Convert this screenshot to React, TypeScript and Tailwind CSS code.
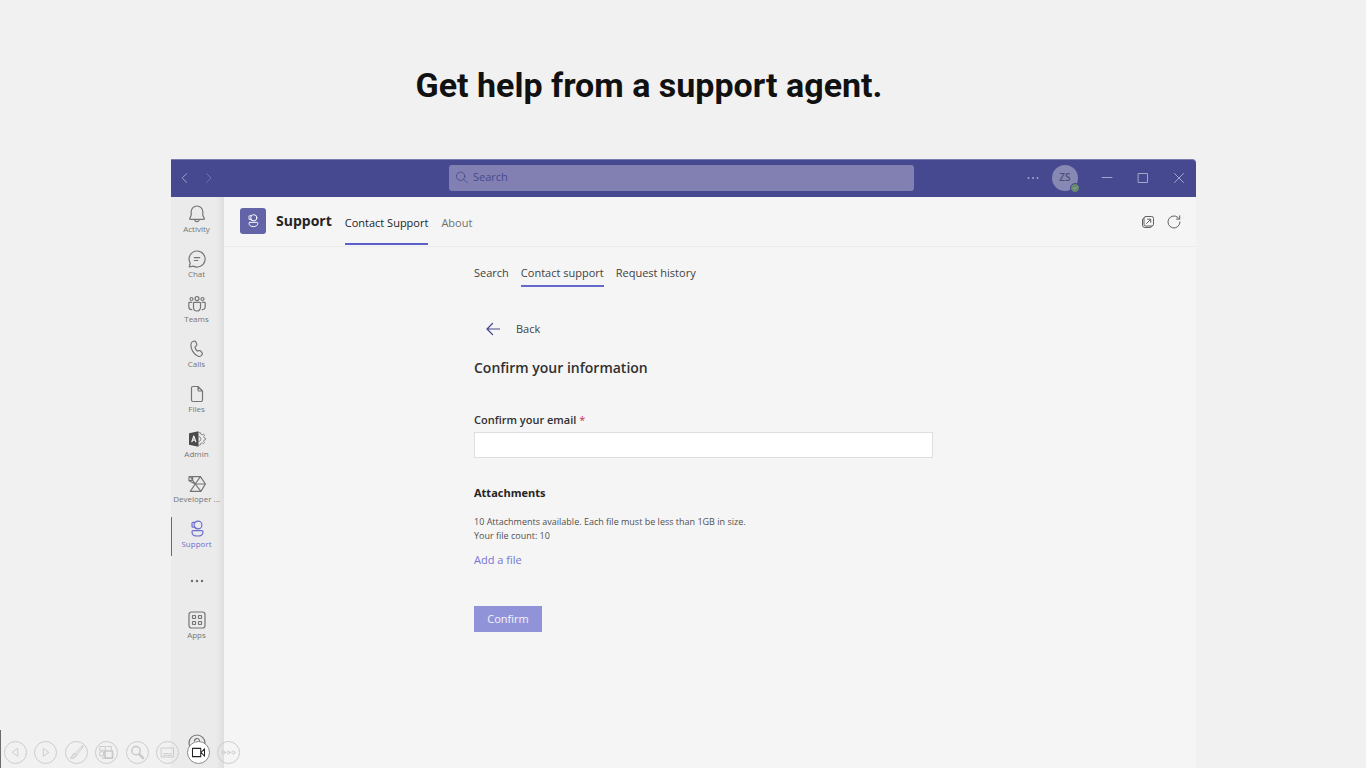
import type { ReactNode } from "react";

const stroke = {
  fill: "none",
  stroke: "currentColor",
  strokeWidth: 1.2,
  strokeLinecap: "round" as const,
  strokeLinejoin: "round" as const,
};

function Glyph({ children, className = "h-5 w-5", box = 20 }: { children: ReactNode; className?: string; box?: number }) {
  return (
    <svg viewBox={`0 0 ${box} ${box}`} className={className} aria-hidden="true" {...stroke}>
      {children}
    </svg>
  );
}

const supportShape = (
  <>
    <circle cx="11" cy="6" r="3.900" />
    <path d="M7.500 3.400H5.900a.9.9 0 0 0-.9.900v3a.9.9 0 0 0 .9.900h1.700M7.300 7.800c.5 1.100 1.500 1.800 2.800 1.800" />
    <path d="M5.800 11.700h9a1.200 1.200 0 0 1 1.200 1.200c0 2.500-2.300 4.100-5.500 4.100S5 15.400 5 12.900c0-.7.300-1.200.8-1.200Z" />
  </>
);

const railItems: { label: string; icon: ReactNode; active?: boolean }[] = [
  {
    label: "Activity",
    icon: (
      <Glyph>
        <path d="M10 2a5.800 5.800 0 0 0-5.800 5.800v3.500L2.700 14.600c-.1.400.1.700.5.700h13.600c.4 0 .6-.3.500-.7l-1.500-3.300V7.800A5.800 5.800 0 0 0 10 2ZM7.800 15.500a2.200 2.200 0 0 0 4.400 0" />
      </Glyph>
    ),
  },
  {
    label: "Chat",
    icon: (
      <Glyph>
        <path d="M10 2a8 8 0 1 1-3.600 15.100L2.300 18l.9-4A8 8 0 0 1 10 2ZM7.300 8.600h5.400M7.300 11.500h3.400" />
      </Glyph>
    ),
  },
  {
    label: "Teams",
    icon: (
      <Glyph>
        <circle cx="10" cy="4.600" r="2" />
        <circle cx="4.500" cy="5" r="1.500" />
        <circle cx="15.500" cy="5" r="1.500" />
        <path d="M7.300 8.300h5.400a.8.8 0 0 1 .8.8v4.400a3.500 3.500 0 0 1-7 0V9.100a.8.8 0 0 1 .8-.8ZM4.800 8.300H2.600a.8.8 0 0 0-.8.8v3.600a3 3 0 0 0 3 3M15.200 8.300h2.200a.8.8 0 0 1 .8.8v3.600a3 3 0 0 1-3 3" />
      </Glyph>
    ),
  },
  {
    label: "Calls",
    icon: (
      <Glyph>
        <path d="m6 2.500 1.100-.3c.8-.2 1.500.1 1.800.8l.8 1.900c.3.700.1 1.400-.4 1.900L7.900 8.100c.3 1.500 1.200 3 2.500 4l1.700-.5c.7-.2 1.400 0 1.800.6l1.200 1.700c.4.600.4 1.400-.2 1.900l-.7.800c-.8.800-2 1.100-3 .7-4.600-1.900-7.600-7.200-7.300-11.800.1-1.400.8-2.600 2.100-3Z" />
      </Glyph>
    ),
  },
  {
    label: "Files",
    icon: (
      <Glyph>
        <path d="M6 2.500h5l4.500 4.500v9A1.500 1.500 0 0 1 14 17.500H6A1.500 1.500 0 0 1 4.500 16V4A1.500 1.500 0 0 1 6 2.500ZM11 2.500V6a1 1 0 0 0 1 1h3.500" />
      </Glyph>
    ),
  },
  {
    label: "Admin",
    icon: (
      <Glyph>
        <path strokeWidth="1" stroke="#8c8c8c" d="M12 3.600h1.400l.4 1.600 1.400.6 1.400-.8 1 1.200-.9 1.400.5 1.300 1.400.3v1.400l-1.400.4-.5 1.300.8 1.400-1 1-1.400-.8-1.400.6-.4 1.500H12M12 7.400a2.700 2.700 0 0 1 0 5.200" />
        <path fill="#4a4a4a" stroke="none" d="m2 4.200 9.500-2v15.600l-9.500-2V4.200Z" />
        <path stroke="#f0f0f0" d="M4.900 12.800 6.800 7l2 5.800M5.600 11.200h2.500" />
      </Glyph>
    ),
  },
  {
    label: "Developer ...",
    icon: (
      <Glyph>
        <path d="M2.400 2.600h11l5 7.400-4.500 7.400H3.300L8.200 10 2 6.700V3c0-.2.1-.4.4-.4ZM3.200 2.600 8.200 10h10M8.200 10l5.700 7.400M8.200 10l5.200-7.400M2.400 6.500h3.200V3" />
      </Glyph>
    ),
  },
  { label: "Support", icon: <Glyph>{supportShape}</Glyph>, active: true },
];

function RailButton({ label, icon, active }: { label: string; icon: ReactNode; active?: boolean }) {
  return (
    <button
      type="button"
      className={`relative flex h-[45px] w-full flex-col items-center pt-1 ${active ? "text-[#6c6fd0]" : "text-[#757575]"}`}
    >
      {active && <span className="absolute top-0.5 bottom-1 left-0 w-px bg-[#5b5fc7]" />}
      {icon}
      <span className="text-[8px] leading-[10px] whitespace-nowrap">{label}</span>
    </button>
  );
}

function TitleBar() {
  return (
    <header className="flex h-[38px] items-center rounded-tr-sm border-t border-[#7a7cb0] bg-[#464890] pb-0.5 text-[#a5a6ca]">
      <div className="flex flex-1 items-center gap-2 pl-1.5">
        <button type="button" aria-label="Back">
          <Glyph className="h-4 w-4"><path d="m12 4.500-5.500 5.500 5.500 5.500" /></Glyph>
        </button>
        <button type="button" aria-label="Forward" className="text-[#7274ac]">
          <Glyph className="h-4 w-4"><path d="m7 4.500 5.500 5.500-5.500 5.500" /></Glyph>
        </button>
      </div>
      <label className="flex h-[26px] w-[465px] items-center gap-1 rounded-[3px] bg-[#8280b2] px-1.5 text-[#484a8c]">
        <Glyph className="h-3.5 w-3.5"><circle cx="8" cy="7.500" r="6" /><path d="m12.500 12 5 5" /></Glyph>
        <input
          type="text"
          aria-label="Search"
          placeholder="Search"
          className="min-w-0 flex-1 bg-transparent text-[11px] outline-none placeholder:text-[#484a8c]"
        />
      </label>
      <div className="flex flex-1 items-center justify-end pr-2.5">
        <button type="button" aria-label="More options" className="mr-3">
          <svg viewBox="0 0 14 14" className="h-3.5 w-3.5" fill="currentColor">
            <circle cx="2.500" cy="7" r="1" /><circle cx="7" cy="7" r="1" /><circle cx="11.500" cy="7" r="1" />
          </svg>
        </button>
        <button type="button" className="relative mr-[22px] h-[26px] w-[26px] rounded-full bg-[#8788b3] text-[10px] font-semibold text-[#4d4e73]">
          ZS
          <span className="absolute -right-0.5 -bottom-0.5 flex h-[10px] w-[10px] items-center justify-center rounded-full border border-[#464890] bg-[#66886f] text-[#a9bfb4]">
            <Glyph className="h-1.5 w-1.5"><path strokeWidth="2.500" d="m4 10 4 4 8-8" /></Glyph>
          </span>
        </button>
        <button type="button" aria-label="Minimize" className="mr-[22px]">
          <Glyph className="h-3.5 w-3.5" box={14}><path strokeWidth="1" d="M2 6.500h10" /></Glyph>
        </button>
        <button type="button" aria-label="Maximize" className="mr-[22px]">
          <Glyph className="h-3.5 w-3.5" box={14}><path strokeWidth="1" d="M2.500 2.500h9v9h-9Z" /></Glyph>
        </button>
        <button type="button" aria-label="Close">
          <Glyph className="h-3.5 w-3.5" box={14}><path strokeWidth="1" d="m2.500 2.500 9 9M11.500 2.500l-9 9" /></Glyph>
        </button>
      </div>
    </header>
  );
}

function AppHeader() {
  return (
    <div className="flex h-[50px] items-stretch border-b border-[#ebebeb] bg-[#f5f5f5] pr-[15px] pl-4">
      <div className="mt-[11px] mr-2.5 flex h-[26px] w-[26px] items-center justify-center rounded-[3px] bg-[#6264a7] text-white">
        <Glyph className="h-4 w-4">{supportShape}</Glyph>
      </div>
      <h2 className="mt-3.5 mr-[13px] text-[14px] leading-5 font-bold text-[#242424]">Support</h2>
      <nav className="mb-px flex gap-[13px] text-[11px]">
        <a href="#contact" className="flex items-center border-b-2 border-[#5b5fc7] pt-1.5 font-medium text-[#242424]">Contact Support</a>
        <a href="#about" className="flex items-center border-b-2 border-transparent pt-1.5 text-[#707070]">About</a>
      </nav>
      <div className="ml-auto flex items-center gap-3 text-[#616161]">
        <button type="button" aria-label="Open in new window">
          <Glyph className="h-3.5 w-3.5" box={14}>
            <rect x="3" y="1.500" width="9.500" height="9.500" rx="1.800" strokeWidth="1" />
            <path d="M3 3a2 2 0 0 0-1.500 2v5a2.500 2.500 0 0 0 2.500 2.500h5A2 2 0 0 0 11 11M5.500 8.500l4-4M6.500 4.200h3.200v3.200" strokeWidth="1" />
          </Glyph>
        </button>
        <button type="button" aria-label="Refresh">
          <Glyph className="h-3.5 w-3.5" box={14}>
            <path strokeWidth="1" d="M13 7a6 6 0 1 1-2-4.500l1.500 1.500M12.700.8V4.100H9.500" />
          </Glyph>
        </button>
      </div>
    </div>
  );
}

function SupportForm() {
  return (
    <form className="ml-[250px] flex max-w-[459px] flex-col items-start pt-4">
      <nav className="flex gap-3 text-[11px] leading-4 text-[#424242]">
        <a href="#search" className="pt-0.5 pb-1">Search</a>
        <a href="#support" className="border-b-2 border-[#6669cc] pt-0.5 pb-1">Contact support</a>
        <a href="#history" className="pt-0.5 pb-1">Request history</a>
      </nav>
      <button type="button" className="mt-[34px] ml-3 flex items-center gap-4 text-[11px] leading-4 text-[#424242]">
        <Glyph className="h-3.5 w-3.5 text-[#464890]" box={14}><path d="M13.500 7H1.500M6.500 1.500 1 7l5.500 5.500" /></Glyph>
        Back
      </button>
      <h3 className="mt-[21px] text-[14px] leading-5 font-semibold text-[#303030]">Confirm your information</h3>
      <label htmlFor="email" className="mt-[34px] text-[11px] leading-4 font-semibold text-[#303030]">
        Confirm your email <span className="font-normal text-[#c4314b]">*</span>
      </label>
      <input id="email" type="email" className="mt-1 h-[26px] w-full border border-[#dedede] bg-white px-2 text-[11px] outline-none" />
      <h4 className="mt-[27px] text-[11px] leading-4 font-bold text-[#242424]">Attachments</h4>
      <p className="mt-3.5 text-[9px] leading-[14px] text-[#505050]">
        10 Attachments available. Each file must be less than 1GB in size.
        <br />
        Your file count: 10
      </p>
      <button type="button" className="mt-[9px] text-[11px] leading-4 text-[#7376d6]">Add a file</button>
      <button type="submit" className="mt-[38px] h-[26px] w-[68px] bg-[#9193d8] text-[11px] text-[#f4f4fc]">Confirm</button>
    </form>
  );
}

const tools: { label: string; icon: ReactNode; active?: boolean }[] = [
  { label: "Previous slide", icon: <path d="M13 5v10l-7-5Z" /> },
  { label: "Next slide", icon: <path d="M7 5v10l7-5Z" /> },
  {
    label: "Pen",
    icon: (
      <>
        <path d="M18 1.200 8.300 10.800l2.200 2.200L19 2.400c.5-.8-.3-1.700-1-1.200Z" />
        <path fill="currentColor" fillOpacity=".35" d="M7.500 11.500c-1.500-.2-2.300.6-2.700 2-.4 1.500-1.500 2.700-3.300 3.800 3.300 1 7.200.4 8.300-3.500Z" />
      </>
    ),
  },
  {
    label: "All slides",
    icon: (
      <>
        <path d="M1.500 2h7v5h-7ZM10.500 2h6v4M1.500 9H6v5.500H1.500ZM5 16v2h2" />
        <path d="M8 8h10v9.500H8Z" strokeWidth="2.200" />
      </>
    ),
  },
  {
    label: "Zoom",
    icon: (
      <>
        <circle cx="8" cy="7.500" r="5.500" strokeWidth="2" />
        <path d="m12.500 12.500 5 5" strokeWidth="3" />
      </>
    ),
  },
  { label: "Subtitles", icon: <path d="M2 4h16v12H2ZM5 11.500h5M12 11.500h3M5 13.800h3M10 13.800h5" /> },
  { label: "Camera", icon: <path strokeWidth="1.400" d="M2 4.500h11v11H2ZM13.500 10 18 5v10Z" />, active: true },
  {
    label: "More",
    icon: (
      <>
        <circle cx="3.500" cy="10" r="2" />
        <circle cx="10" cy="10" r="2" />
        <circle cx="16.500" cy="10" r="2" />
      </>
    ),
  },
];

export default function App() {
  return (
    <div className="relative flex h-screen flex-col overflow-hidden bg-[#f1f1f1] font-['Open_Sans','Noto_Sans',sans-serif]">
      <h1 className="mt-[61px] mr-[68px] text-center font-[Roboto,sans-serif] text-[34px] leading-[48px] font-bold text-[#111111]">
        Get help from a support agent.
      </h1>
      <div className="mt-[50px] mr-[170px] ml-[171px] flex min-h-0 flex-1 flex-col">
        <TitleBar />
        <div className="flex min-h-0 flex-1">
          <aside className="flex w-[53px] shrink-0 flex-col overflow-hidden bg-linear-to-r from-[#ebebeb] from-85% to-[#dedede] pt-[3px] pr-0.5">
            {railItems.map((item) => (
              <RailButton key={item.label} {...item} />
            ))}
            <button type="button" aria-label="More apps" className="flex h-[46px] items-center justify-center pb-1 text-[#6b6b6b]">
              <svg viewBox="0 0 14 14" className="h-3.5 w-3.5" fill="currentColor">
                <circle cx="2" cy="7" r="1.200" /><circle cx="7" cy="7" r="1.200" /><circle cx="12" cy="7" r="1.200" />
              </svg>
            </button>
            <RailButton
              label="Apps"
              icon={
                <Glyph>
                  <rect x="2" y="2" width="16" height="16" rx="2.500" />
                  <rect x="5.500" y="5.500" width="3" height="3" rx=".5" />
                  <rect x="11.500" y="5.500" width="3" height="3" rx=".5" />
                  <rect x="5.500" y="11.500" width="3" height="3" rx=".5" />
                  <rect x="11.500" y="11.500" width="3" height="3" rx=".5" />
                </Glyph>
              }
            />
            <button type="button" aria-label="Help" className="mt-auto mb-[15px] flex justify-center text-[#757575]">
              <Glyph>
                <circle cx="10" cy="10" r="8" />
                <path d="M7.500 8a2.500 2.500 0 1 1 3.500 2.300c-.7.300-1 .8-1 1.700M10 14v.2" />
              </Glyph>
            </button>
          </aside>
          <main className="min-w-0 flex-1 bg-[#f5f5f5]">
            <AppHeader />
            <SupportForm />
          </main>
        </div>
      </div>
      <div className="absolute bottom-0 left-0 h-[38px] w-px bg-[#6b6b6b]" />
      <div className="absolute bottom-1 left-1 flex w-[236px] justify-between">
        {tools.map((tool) => (
          <button
            key={tool.label}
            type="button"
            aria-label={tool.label}
            className={`flex h-[23px] w-[23px] items-center justify-center rounded-full border ${tool.active ? "border-[#8a8a8a] bg-white text-[#222222]" : "border-[#cccccc] text-[#c8c8c8]"}`}
          >
            <Glyph className="h-[15px] w-[15px]">{tool.icon}</Glyph>
          </button>
        ))}
      </div>
    </div>
  );
}
